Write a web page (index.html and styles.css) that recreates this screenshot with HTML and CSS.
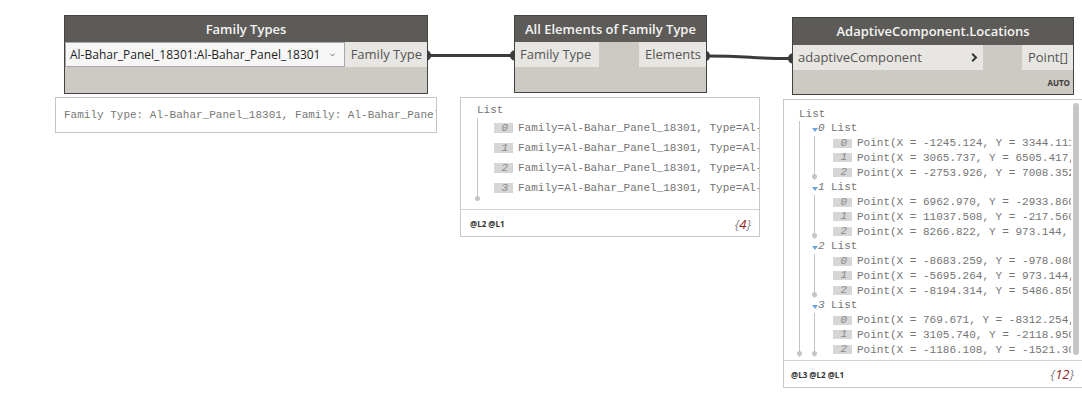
FILE: index.html
```html
<!DOCTYPE html>
<html lang="en">
<head>
    <meta charset="UTF-8">
    <meta name="viewport" content="width=device-width, initial-scale=1.0">
    <title>Dynamo Graph</title>
    <link rel="stylesheet" href="styles.css">
</head>
<body>
    <div class="canvas">
        <!-- Family Types -->
        <div class="node node-family-types">
            <div class="node-title">Family Types</div>
            <div class="node-ports">
                <div class="dropdown">
                    <span class="dropdown-text">Al-Bahar_Panel_18301:Al-Bahar_Panel_18301</span>
                    <svg class="dropdown-arrow" width="5" height="4" viewBox="0 0 5 4"><path d="M0.5 0.8 L2.5 3 L4.5 0.8" fill="none" stroke="#777" stroke-width="1"/></svg>
                </div>
                <div class="port port-out">Family Type</div>
            </div>
            <div class="node-foot"></div>
        </div>
        <div class="preview preview-family-types">Family Type: Al-Bahar_Panel_18301, Family: Al-Bahar_Panel_18301</div>

        <!-- All Elements of Family Type -->
        <div class="node node-all-elements">
            <div class="node-title">All Elements of Family Type</div>
            <div class="node-ports">
                <div class="port port-in">Family Type</div>
                <div class="port port-out">Elements</div>
            </div>
            <div class="node-foot"></div>
        </div>
        <div class="watch watch-elements">
            <div class="watch-body">
                <div class="tree">
                    <div class="tree-label">List</div>
                    <div class="branch">
                        <div class="item"><span class="idx">0</span>Family=Al-Bahar_Panel_18301, Type=Al-Bahar_Panel_18301</div>
                        <div class="item"><span class="idx">1</span>Family=Al-Bahar_Panel_18301, Type=Al-Bahar_Panel_18301</div>
                        <div class="item"><span class="idx">2</span>Family=Al-Bahar_Panel_18301, Type=Al-Bahar_Panel_18301</div>
                        <div class="item"><span class="idx">3</span>Family=Al-Bahar_Panel_18301, Type=Al-Bahar_Panel_18301</div>
                    </div>
                </div>
            </div>
            <div class="watch-foot">
                <span class="levels">@L2 @L1</span>
                <span class="count">{<b>4</b>}</span>
            </div>
        </div>

        <!-- AdaptiveComponent.Locations -->
        <div class="node node-locations">
            <div class="node-title">AdaptiveComponent.Locations</div>
            <div class="node-ports">
                <div class="port port-in port-wide">
                    <span>adaptiveComponent</span>
                    <svg class="lacing" width="7" height="9" viewBox="0 0 7 9"><path d="M1.2 0.8 L5 4.5 L1.2 8.2" fill="none" stroke="#333" stroke-width="2"/></svg>
                </div>
                <div class="port port-out">Point[]</div>
            </div>
            <div class="node-foot"><span class="auto">AUTO</span></div>
        </div>
        <div class="watch watch-locations">
            <div class="watch-body">
                <div class="tree">
                    <div class="tree-label">List</div>
                    <div class="branch">
                        <div class="sub-label"><span class="tri"></span><span class="sub-idx">0</span><span>List</span></div>
                        <div class="branch branch-inner">
                            <div class="item"><span class="idx">0</span>Point(X = -1245.124, Y = 3344.111, Z = 0.000)</div>
                            <div class="item"><span class="idx">1</span>Point(X = 3065.737, Y = 6505.417, Z = 0.000)</div>
                            <div class="item"><span class="idx">2</span>Point(X = -2753.926, Y = 7008.352, Z = 0.000)</div>
                        </div>
                        <div class="sub-label"><span class="tri"></span><span class="sub-idx">1</span><span>List</span></div>
                        <div class="branch branch-inner">
                            <div class="item"><span class="idx">0</span>Point(X = 6962.970, Y = -2933.860, Z = 0.000)</div>
                            <div class="item"><span class="idx">1</span>Point(X = 11037.508, Y = -217.560, Z = 0.000)</div>
                            <div class="item"><span class="idx">2</span>Point(X = 8266.822, Y = 973.144, Z = 0.000)</div>
                        </div>
                        <div class="sub-label"><span class="tri"></span><span class="sub-idx">2</span><span>List</span></div>
                        <div class="branch branch-inner">
                            <div class="item"><span class="idx">0</span>Point(X = -8683.259, Y = -978.080, Z = 0.000)</div>
                            <div class="item"><span class="idx">1</span>Point(X = -5695.264, Y = 973.144, Z = 0.000)</div>
                            <div class="item"><span class="idx">2</span>Point(X = -8194.314, Y = 5486.850, Z = 0.000)</div>
                        </div>
                        <div class="sub-label"><span class="tri"></span><span class="sub-idx">3</span><span>List</span></div>
                        <div class="branch branch-inner">
                            <div class="item"><span class="idx">0</span>Point(X = 769.671, Y = -8312.254, Z = 0.000)</div>
                            <div class="item"><span class="idx">1</span>Point(X = 3105.740, Y = -2118.950, Z = 0.000)</div>
                            <div class="item"><span class="idx">2</span>Point(X = -1186.108, Y = -1521.300, Z = 0.000)</div>
                        </div>
                    </div>
                </div>
                <div class="scrollbar"></div>
            </div>
            <div class="watch-foot">
                <span class="levels">@L3 @L2 @L1</span>
                <span class="count">{<b>12</b>}</span>
            </div>
        </div>

        <!-- connectors -->
        <svg class="wires" width="1082" height="398" viewBox="0 0 1082 398">
            <path d="M428 55.5 L513 55.5" stroke="#3b3b3b" stroke-width="3" fill="none"/>
            <path d="M707 56 C 750 56, 750 58.5, 791 58.5" stroke="#3b3b3b" stroke-width="3" fill="none"/>
            <path d="M427 50.5 A4 5 0 0 1 427 60.5 Z" fill="#3b3b3b"/>
            <path d="M514 50.5 A4 5 0 0 0 514 60.5 Z" fill="#3b3b3b"/>
            <path d="M706 51 A4 5 0 0 1 706 61 Z" fill="#3b3b3b"/>
            <path d="M792 53.5 A4 5 0 0 0 792 63.5 Z" fill="#3b3b3b"/>
        </svg>
    </div>
</body>
</html>
```

FILE: styles.css
```css
body {
    margin: 0;
    background-color: #ffffff;
    font-family: "Open Sans", "Noto Sans", sans-serif;
}
.canvas {
    position: relative;
    width: 1082px;
    height: 398px;
    overflow: hidden;
}
.wires {
    position: absolute;
    left: 0;
    top: 0;
    pointer-events: none;
}

/* nodes */
.node {
    position: absolute;
    box-sizing: border-box;
    border: 1px solid #45433f;
    background-color: #cdc9c3;
    display: flex;
    flex-direction: column;
}
.node-title {
    height: 26px;
    line-height: 26px;
    background-color: #5d5b57;
    color: #f4f4f4;
    font-size: 13px;
    font-weight: 600;
    text-align: center;
    white-space: nowrap;
}
.node-ports {
    height: 25px;
    display: flex;
    justify-content: space-between;
}
.node-foot {
    flex: 1;
    display: flex;
    justify-content: flex-end;
    align-items: center;
}
.port {
    background-color: #e8e6e2;
    color: #555555;
    font-size: 13px;
    line-height: 25px;
    white-space: nowrap;
}
.port-in {
    padding: 0 8px 0 5px;
}
.port-out {
    padding: 0 5px 0 6px;
}
.port-wide {
    width: 190px;
    box-sizing: border-box;
    display: flex;
    justify-content: space-between;
    align-items: center;
    padding-right: 5px;
}
.dropdown {
    flex: 1;
    box-sizing: border-box;
    border: 1px solid #a8a8a8;
    background-color: #f6f6f6;
    display: flex;
    align-items: center;
    padding: 0 9px 0 4px;
    gap: 8px;
}
.dropdown-text {
    flex: 1;
    font-size: 12px;
    color: #1e1e1e;
    white-space: nowrap;
}
.auto {
    font-size: 8px;
    font-weight: 700;
    color: #3c3c3c;
    margin-right: 3px;
}

.node-family-types {
    left: 64px;
    top: 15px;
    width: 364px;
    height: 79px;
}
.node-all-elements {
    left: 514px;
    top: 15px;
    width: 193px;
    height: 78px;
}
.node-locations {
    left: 792px;
    top: 17px;
    width: 282px;
    height: 78px;
}
.node-locations .node-title {
    height: 27px;
    line-height: 27px;
}

/* previews and watches */
.preview {
    position: absolute;
    box-sizing: border-box;
    border: 1px solid #c4c4c4;
    background-color: #ffffff;
    font-family: "Liberation Mono", monospace;
    font-size: 11px;
    color: #777777;
    line-height: 34px;
    padding-left: 8px;
    white-space: nowrap;
    overflow: hidden;
}
.preview-family-types {
    left: 55px;
    top: 97px;
    width: 382px;
    height: 36px;
}
.watch {
    position: absolute;
    box-sizing: border-box;
    border: 1px solid #c8c8c8;
    background-color: #ffffff;
    font-family: "Liberation Mono", monospace;
    font-size: 11px;
    color: #747474;
}
.watch-body {
    display: flex;
}
.tree {
    flex: 1;
    overflow: hidden;
    white-space: nowrap;
}
.watch-foot {
    border-top: 1px solid #d2d2d2;
    display: flex;
    justify-content: space-between;
    align-items: center;
    padding: 0 8px 0 9px;
    font-family: "Open Sans", sans-serif;
}
.levels {
    font-size: 8px;
    font-weight: 700;
    color: #333333;
}
.count {
    font-size: 13px;
    font-style: italic;
    color: #8a8a8a;
}
.count b {
    font-weight: 400;
    color: #8b1c1c;
}

.branch {
    position: relative;
    border-left: 1px solid #c4c4c4;
}
.branch::after {
    content: "";
    position: absolute;
    left: -3px;
    bottom: 0;
    width: 5px;
    height: 5px;
    border-radius: 50%;
    background-color: #c4c4c4;
}
.item {
    display: flex;
    align-items: center;
}
.idx {
    width: 19px;
    height: 10px;
    line-height: 10px;
    box-sizing: border-box;
    padding-right: 5px;
    margin-right: 5px;
    background-color: #d6d6d6;
    color: #8a8a8a;
    font-style: italic;
    text-align: right;
    flex-shrink: 0;
}

.watch-elements {
    left: 460px;
    top: 97px;
    width: 300px;
    height: 140px;
}
.watch-elements .watch-body {
    height: 111px;
}
.watch-elements .tree {
    padding: 5px 0 0 16px;
}
.watch-elements .tree-label {
    line-height: 15px;
}
.watch-elements .branch {
    padding: 0 0 3px 16px;
}
.watch-elements .item {
    height: 20px;
}
.watch-elements .watch-foot {
    height: 27px;
}

.watch-locations {
    left: 783px;
    top: 99px;
    width: 300px;
    height: 289px;
}
.watch-locations .watch-body {
    height: 260px;
}
.watch-locations .tree {
    padding: 8px 0 0 15px;
}
.watch-locations .tree-label {
    line-height: 13px;
}
.watch-locations .branch {
    padding-left: 12px;
}
.watch-locations .branch::after {
    bottom: 1px;
}
.watch-locations .branch-inner {
    margin-left: 2px;
    padding-left: 18px;
}
.watch-locations .item,
.sub-label {
    height: 14.75px;
}
.sub-label {
    display: flex;
    align-items: center;
    gap: 6px;
}
.sub-label .tri {
    margin-right: -6px;
}
.sub-idx {
    font-style: italic;
    width: 7px;
}
.tri {
    width: 0;
    height: 0;
    border-left: 3.5px solid transparent;
    border-right: 3.5px solid transparent;
    border-top: 4px solid #6ea5d8;
    margin-top: 4px;
}
.watch-locations .idx {
    height: 9px;
    line-height: 9px;
}
.scrollbar {
    width: 6px;
    margin: 3px 3px 5px 2px;
    background-color: #c6c6c6;
    border-radius: 3px;
}
.watch-locations .watch-foot {
    height: 26px;
    padding-left: 7px;
}
```
